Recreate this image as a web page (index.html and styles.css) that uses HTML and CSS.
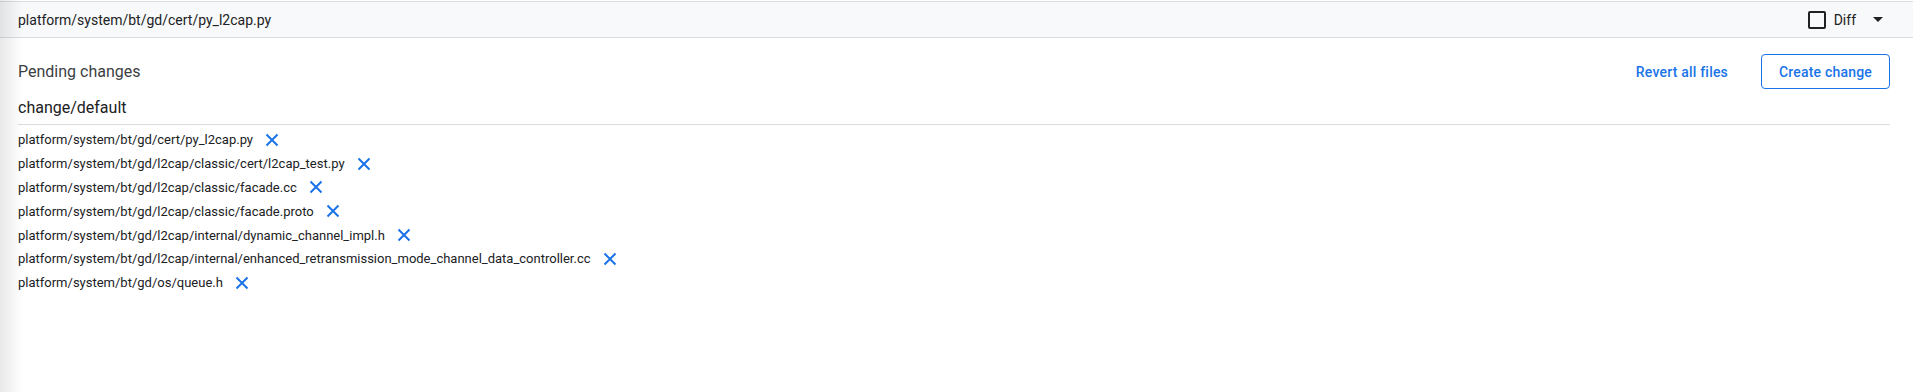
FILE: index.html
```html
<!DOCTYPE html>
<html lang="en">
<head>
	<meta charset="UTF-8">
	<title>Pending changes</title>
	<link rel="stylesheet" href="styles.css">
</head>
<body>
	<div class="shade"></div>
	<div class="file-bar">
		<span class="file-bar-path">platform/system/bt/gd/cert/py_l2cap.py</span>
		<div class="file-bar-tools">
			<label class="diff-toggle"><span class="check"></span>Diff</label>
			<span class="caret"></span>
		</div>
	</div>
	<div class="changes">
		<div class="changes-head">
			<span class="changes-title">Pending changes</span>
			<div class="changes-actions">
				<button class="btn-text">Revert all files</button>
				<button class="btn-outline">Create change</button>
			</div>
		</div>
		<div class="branch">change/default</div>
		<ul class="file-list">
			<li><span>platform/system/bt/gd/cert/py_l2cap.py</span><svg class="remove" viewBox="0 0 14 14"><path d="M1.5 1.5L12.5 12.5M12.5 1.5L1.5 12.5"/></svg></li>
			<li><span>platform/system/bt/gd/l2cap/classic/cert/l2cap_test.py</span><svg class="remove" viewBox="0 0 14 14"><path d="M1.5 1.5L12.5 12.5M12.5 1.5L1.5 12.5"/></svg></li>
			<li><span>platform/system/bt/gd/l2cap/classic/facade.cc</span><svg class="remove" viewBox="0 0 14 14"><path d="M1.5 1.5L12.5 12.5M12.5 1.5L1.5 12.5"/></svg></li>
			<li><span>platform/system/bt/gd/l2cap/classic/facade.proto</span><svg class="remove" viewBox="0 0 14 14"><path d="M1.5 1.5L12.5 12.5M12.5 1.5L1.5 12.5"/></svg></li>
			<li><span>platform/system/bt/gd/l2cap/internal/dynamic_channel_impl.h</span><svg class="remove" viewBox="0 0 14 14"><path d="M1.5 1.5L12.5 12.5M12.5 1.5L1.5 12.5"/></svg></li>
			<li><span>platform/system/bt/gd/l2cap/internal/enhanced_retransmission_mode_channel_data_controller.cc</span><svg class="remove" viewBox="0 0 14 14"><path d="M1.5 1.5L12.5 12.5M12.5 1.5L1.5 12.5"/></svg></li>
			<li><span>platform/system/bt/gd/os/queue.h</span><svg class="remove" viewBox="0 0 14 14"><path d="M1.5 1.5L12.5 12.5M12.5 1.5L1.5 12.5"/></svg></li>
		</ul>
	</div>
</body>
</html>
```

FILE: styles.css
```css
*{
	margin:0;
	padding:0;
	box-sizing: border-box;
}
html,body{ height: 100%; }
body{
	font-family: Roboto, "Liberation Sans", sans-serif;
	color: #202124;
	background: #fff;
}
.shade{
	position: fixed;
	left:0;
	top:0;
	width:22px;
	height: 100%;
	background: linear-gradient(to right, rgba(0,0,0,0.09), rgba(0,0,0,0));
	pointer-events: none;
}
.file-bar{
	margin-top:1px;
	height: 37px;
	display: flex;
	align-items: center;
	justify-content: space-between;
	padding:0 30px 0 18px;
	background: #f8f9fa;
	border-top:1px solid #dadce0;
	border-bottom:1px solid #dadce0;
	font-size: 14px;
}
.file-bar-tools{
	display: flex;
	align-items: center;
}
.diff-toggle{
	display: flex;
	align-items: center;
	gap:8px;
}
.check{
	width:18px;
	height: 18px;
	border:2px solid #202124;
	border-radius: 2px;
}
.caret{
	margin-left:17px;
	width:0;
	height: 0;
	border-left:5px solid transparent;
	border-right:5px solid transparent;
	border-top:5px solid #202124;
}
.changes{
	padding:0 23px 0 18px;
}
.changes-head{
	margin-top:16px;
	height: 35px;
	display: flex;
	align-items: center;
	justify-content: space-between;
}
.changes-title{
	font-size: 16px;
	color: #3c4043;
}
.changes-actions{
	display: flex;
	align-items: center;
	gap:17px;
}
.changes-actions button{
	font-family: Roboto, "Liberation Sans", sans-serif;
	font-size: 14px;
	font-weight: 500;
	color: #1a73e8;
	background: none;
	cursor: pointer;
	letter-spacing: 0.2px;
}
.btn-text{
	border:none;
	padding:0 16px;
	height: 35px;
}
.btn-outline{
	height: 35px;
	width:129px;
	border:1px solid #1a73e8;
	border-radius: 4px;
}
.branch{
	margin-top:7px;
	font-size: 16px;
	line-height: 24px;
	padding-bottom: 4px;
	border-bottom:1px solid #dadce0;
}
.file-list{
	list-style: none;
	margin-top:3px;
	font-size: 13px;
}
.file-list li{
	height: 23.8px;
	display: flex;
	align-items: center;
	gap:12px;
}
.remove{
	width:14px;
	height: 14px;
	fill: none;
	stroke: #1a73e8;
	stroke-width: 2;
}
```
